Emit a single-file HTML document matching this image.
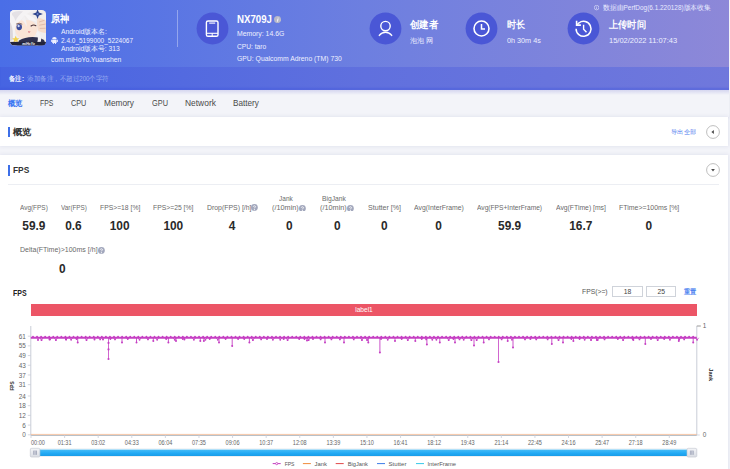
<!DOCTYPE html><html><head><meta charset="utf-8"><style>
html,body{margin:0;padding:0}
body{width:730px;height:469px;overflow:hidden;position:relative;background:#f3f4f9;font-family:"Liberation Sans", sans-serif}
.abs{position:absolute}
.t{position:absolute;white-space:nowrap}
#hdr{position:absolute;left:0;top:0;width:728.5px;height:90px;background:linear-gradient(90deg,#4a6ee7 0%,#6d7fe0 50%,#8d88d8 100%)}
#band{position:absolute;left:0;top:67.2px;width:728.5px;height:22.8px;background:linear-gradient(90deg,#4664e2 0%,#6070de 50%,#7078dc 100%);box-shadow:inset 0 -2.2px 1px rgba(60,80,220,.32)}
#hshadow{position:absolute;left:0;top:90px;width:728.5px;height:5px;background:linear-gradient(rgba(95,95,200,.2),rgba(95,95,200,0))}
#tabs{position:absolute;left:0;top:90px;width:728.5px;height:26.5px;background:#f3f4f9;box-shadow:0 1px 2px rgba(180,185,210,.35)}
.card{position:absolute;left:0;width:728.3px;background:#fff;box-shadow:0 0 4px rgba(190,195,220,.45)}
.inp{position:absolute;top:286.2px;width:28.3px;height:9.3px;border:.7px solid #cfd3da;background:#fff;font-size:6.8px;line-height:9.3px;text-align:center;color:#444}
</style></head><body>
<div id="hdr"></div><div id="band"></div><svg class="abs" style="left:9.9px;top:10px" width="36.1" height="35.6" viewBox="0 0 36 35.5">
<defs><clipPath id="ic"><rect x="0" y="0" width="36" height="35.5" rx="4.2"/></clipPath></defs>
<g clip-path="url(#ic)">
<rect width="36" height="35.5" fill="#f0eded"/>
<path d="M5 14 C6 11 10 10 16 10 C22 10 27 13 27 19 C27 25 23 29 16 29.5 C10 29.5 5 25 5 19 Z" fill="#fae4d6"/>
<path d="M0 0 H27 C22 1 17 3 14 6 C12 9 10 11 7 13 C5 16 4.5 22 5 28 L5.5 35.5 H0 Z" fill="#f5f3f4"/>
<path d="M14 6 C16 9 17 13 16.5 17 C15.5 14 14 11 11.5 10 Z" fill="#f3f1f2"/>
<path d="M14 4 C19 4 24 7 27 12 C25 11 22 10 19 10 C17 8 15.5 6 14 4 Z" fill="#f7f5f6"/>
<path d="M2 3 C5 1 9 0.5 13 1.5 C10 4 7 7 5.5 11 C4.5 8 3.5 6 2 5 Z" fill="#e4e1e5"/>
<path d="M0 12 C2.5 16 3.2 22 2.8 30 L0 31 Z" fill="#dad6db"/>
<ellipse cx="9.2" cy="17" rx="2.8" ry="3.1" fill="#3b4d9c"/>
<ellipse cx="8.6" cy="16" rx="1.1" ry="1.2" fill="#cfd9f7"/>
<path d="M6.2 14 q3 -1.6 6 .2" stroke="#5b4448" stroke-width=".8" fill="none"/>
<path d="M21 16 q2.4 -1.8 4.8 -.3" stroke="#4a3438" stroke-width="1.1" fill="none" stroke-linecap="round"/>
<path d="M18 21.6 q1 1 2.2 0" stroke="#d86f7a" stroke-width=".9" fill="#e88b92"/>
<path d="M27.5 8 C30.5 7.5 33.5 9 36 11 V23 C33 23 30 22 28 20.5 C27 17 26.5 12 27.5 8 Z" fill="#f5dccb"/>
<path d="M29 12 L34.5 10.2 M29.2 15.2 L35.5 14 M29.6 18.4 L35.5 18.2" stroke="#d7a794" stroke-width=".6"/>
<path d="M27.5 -1 L28.8 2.6 L32.8 4 L28.8 5.4 L27.5 9 L26.2 5.4 L22.2 4 L26.2 2.6 Z" fill="#2d438c"/>
<circle cx="27.5" cy="4" r="1" fill="#6d83c8"/>
<path d="M5.7 25.8 L6.8 28.1 L9.3 28.3 L7.4 30 L8 32.4 L5.7 31.2 L3.4 32.4 L4 30 L2.1 28.3 L4.6 28.1 Z" fill="#f3d24f"/>
<path d="M9 30.5 C14 27 22 26 29 27.5 L34 30 L36 35.5 H7 Z" fill="#2e304e"/>
<path d="M27.5 21.5 C31 24 32 28 30.5 32.5 L28 35.5 L25.5 35.5 C28.5 31 28.5 26.5 26 23.5 Z" fill="#f3f1f3"/>
<rect x="0" y="31.8" width="36" height="3.7" fill="#23243a"/>
<text x="18.5" y="34.6" font-size="3.4" fill="#fff" text-anchor="middle" font-family="Liberation Sans" font-weight="700" font-style="italic">miHoYo</text>
</g></svg>
<div class="t" style="left:51.4px;top:12.50px;font-size:9.5px;line-height:11.40px;color:#fff;font-weight:700;transform:scaleX(0.9200);transform-origin:left center;">原神</div>
<div class="t" style="left:60.6px;top:27.92px;font-size:6.8px;line-height:8.16px;color:#eef0ff;font-weight:400;transform:scaleX(0.9929);transform-origin:left center;">Android版本名:</div>
<div class="t" style="left:60.6px;top:36.62px;font-size:6.8px;line-height:8.16px;color:#eef0ff;font-weight:400;transform:scaleX(0.9523);transform-origin:left center;">2.4.0_5199000_5224067</div>
<div class="t" style="left:60.6px;top:45.22px;font-size:6.8px;line-height:8.16px;color:#eef0ff;font-weight:400;transform:scaleX(0.9875);transform-origin:left center;">Android版本号: 313</div>
<div class="t" style="left:51.2px;top:56.02px;font-size:6.8px;line-height:8.16px;color:#eef0ff;font-weight:400;transform:scaleX(0.9985);transform-origin:left center;">com.miHoYo.Yuanshen</div>
<svg class="abs" style="left:51.3px;top:36.9px" width="6.8" height="7.2" viewBox="0 0 6.8 7.2">
<path d="M1.1 2.1 A2.3 2.1 0 0 1 5.7 2.1 Z" fill="#eef0ff"/><rect x="1.1" y="2.6" width="4.6" height="3.3" rx=".4" fill="#eef0ff"/>
<rect x="0" y="2.6" width=".8" height="2.5" rx=".35" fill="#eef0ff"/><rect x="6" y="2.6" width=".8" height="2.5" rx=".35" fill="#eef0ff"/>
<rect x="1.9" y="5.6" width=".9" height="1.5" rx=".35" fill="#eef0ff"/><rect x="4" y="5.6" width=".9" height="1.5" rx=".35" fill="#eef0ff"/>
</svg><div class="abs" style="left:177px;top:10px;width:1px;height:37px;background:rgba(255,255,255,.35)"></div><svg class="abs" style="left:195.6px;top:12.2px" width="33" height="33" viewBox="0 0 33 33"><circle cx="16.5" cy="16.5" r="15.9" fill="#4a57d6"/><rect x="10.4" y="9" width="11.6" height="15.3" rx="1.6" fill="none" stroke="#fff" stroke-width="1.4"/><line x1="13.2" y1="11.1" x2="19.2" y2="11.1" stroke="#fff" stroke-width="1.1"/><line x1="10.4" y1="21.3" x2="22" y2="21.3" stroke="#fff" stroke-width="1.1"/><line x1="16.2" y1="21.3" x2="16.2" y2="24" stroke="#fff" stroke-width="1"/></svg>
<div class="t" style="left:236.9px;top:14.10px;font-size:10.0px;line-height:12.00px;color:#fff;font-weight:700;transform:scaleX(0.9684);transform-origin:left center;">NX709J</div>
<svg class="abs" style="left:274.15px;top:16.35px" width="7.1" height="7.1" viewBox="0 0 10 10"><circle cx="5" cy="5" r="5" fill="#b8b9c9"/><path d="M5.6 4.2 L4.8 8" stroke="#fff" stroke-width="1.3"/><circle cx="5.8" cy="2.7" r=".75" fill="#fff"/></svg><div class="t" style="left:236.9px;top:30.12px;font-size:6.8px;line-height:8.16px;color:#eef0ff;font-weight:400;transform:scaleX(1.0097);transform-origin:left center;">Memory: 14.6G</div>
<div class="t" style="left:236.9px;top:42.52px;font-size:6.8px;line-height:8.16px;color:#eef0ff;font-weight:400;transform:scaleX(0.9784);transform-origin:left center;">CPU: taro</div>
<div class="t" style="left:236.9px;top:54.62px;font-size:6.8px;line-height:8.16px;color:#eef0ff;font-weight:400;transform:scaleX(1.0051);transform-origin:left center;">GPU: Qualcomm Adreno (TM) 730</div>
<svg class="abs" style="left:369.0px;top:12.3px" width="33" height="33" viewBox="0 0 33 33"><circle cx="16.5" cy="16.5" r="15.9" fill="#4a57d6"/><circle cx="16.5" cy="14.1" r="4.7" fill="none" stroke="#fff" stroke-width="1.4"/><path d="M10.3 23.4 A7.6 7.6 0 0 1 22.7 23.4" fill="none" stroke="#fff" stroke-width="1.4" stroke-linecap="round"/></svg>
<div class="t" style="left:409.9px;top:19.08px;font-size:9.7px;line-height:11.64px;color:#fff;font-weight:700;transform:scaleX(0.9400);transform-origin:left center;">创建者</div>
<div class="t" style="left:409.9px;top:36.62px;font-size:6.8px;line-height:8.16px;color:#eef0ff;font-weight:400;transform:scaleX(1.0179);transform-origin:left center;">泡泡 网</div>
<svg class="abs" style="left:464.7px;top:12.100000000000001px" width="33" height="33" viewBox="0 0 33 33"><circle cx="16.5" cy="16.5" r="15.9" fill="#4a57d6"/><circle cx="16.5" cy="16.5" r="7.5" fill="none" stroke="#fff" stroke-width="1.6"/><path d="M16.5 12 V17 H20" fill="none" stroke="#fff" stroke-width="1.5"/></svg>
<div class="t" style="left:506.6px;top:19.08px;font-size:9.7px;line-height:11.64px;color:#fff;font-weight:700;transform:scaleX(0.9100);transform-origin:left center;">时长</div>
<div class="t" style="left:506.6px;top:36.62px;font-size:6.8px;line-height:8.16px;color:#eef0ff;font-weight:400;transform:scaleX(1.0646);transform-origin:left center;">0h 30m 4s</div>
<svg class="abs" style="left:567.1px;top:12.3px" width="33" height="33" viewBox="0 0 33 33"><circle cx="16.5" cy="16.5" r="15.9" fill="#4a57d6"/><g transform="translate(0 .5)"><path d="M9.1 16.2 A7.45 7.45 0 1 0 11.9 10.5" fill="none" stroke="#fff" stroke-width="1.5"/><path d="M9.6 8.3 V12.6 H13.9" fill="none" stroke="#fff" stroke-width="1.6"/><path d="M10 12.2 L12 10.2" stroke="#fff" stroke-width="1.3"/><path d="M16.6 12.3 V16.8 L19.5 19.8" fill="none" stroke="#fff" stroke-width="1.4"/></g></svg>
<div class="t" style="left:608.5px;top:19.08px;font-size:9.7px;line-height:11.64px;color:#fff;font-weight:700;transform:scaleX(0.9200);transform-origin:left center;">上传时间</div>
<div class="t" style="left:608.5px;top:36.62px;font-size:6.8px;line-height:8.16px;color:#eef0ff;font-weight:400;transform:scaleX(1.1025);transform-origin:left center;">15/02/2022 11:07:43</div>
<svg class="abs" style="left:594.3px;top:5.4px" width="5.2" height="5.2" viewBox="0 0 10 10"><circle cx="5" cy="5" r="4.4" fill="none" stroke="#f0f1ff" stroke-width="1.1"/><rect x="4.45" y="4.3" width="1.1" height="3.4" fill="#f0f1ff"/><circle cx="5" cy="2.9" r=".7" fill="#f0f1ff"/></svg><div class="t" style="left:602.6px;top:4.04px;font-size:6.6px;line-height:7.92px;color:#e8eaff;font-weight:400;transform:scaleX(0.9765);transform-origin:left center;">数据由PerfDog(6.1.220128)版本收集</div>
<div class="t" style="left:9.2px;top:74.50px;font-size:6.5px;line-height:7.80px;color:#f2f4ff;font-weight:700;transform:scaleX(0.9275);transform-origin:left center;">备注:</div>
<div class="t" style="left:26.8px;top:74.50px;font-size:6.5px;line-height:7.80px;color:rgba(220,225,255,.55);font-weight:400;transform:scaleX(0.9333);transform-origin:left center;">添加备注，不超过200个字符</div>
<div id="tabs"></div><div id="hshadow"></div><div class="t" style="left:7.7px;top:98.06px;font-size:8.4px;line-height:10.08px;color:#3b76f2;font-weight:700;transform:scaleX(0.9125);transform-origin:left center;">概览</div>
<div class="t" style="left:40.1px;top:98.06px;font-size:8.4px;line-height:10.08px;color:#4a4a4a;font-weight:400;transform:scaleX(0.8222);transform-origin:left center;">FPS</div>
<div class="t" style="left:70.8px;top:98.06px;font-size:8.4px;line-height:10.08px;color:#4a4a4a;font-weight:400;transform:scaleX(0.8650);transform-origin:left center;">CPU</div>
<div class="t" style="left:104.3px;top:98.06px;font-size:8.4px;line-height:10.08px;color:#4a4a4a;font-weight:400;transform:scaleX(0.9917);transform-origin:left center;">Memory</div>
<div class="t" style="left:151.8px;top:98.06px;font-size:8.4px;line-height:10.08px;color:#4a4a4a;font-weight:400;transform:scaleX(0.8812);transform-origin:left center;">GPU</div>
<div class="t" style="left:185.4px;top:98.06px;font-size:8.4px;line-height:10.08px;color:#4a4a4a;font-weight:400;transform:scaleX(1.0059);transform-origin:left center;">Network</div>
<div class="t" style="left:233.4px;top:98.06px;font-size:8.4px;line-height:10.08px;color:#4a4a4a;font-weight:400;transform:scaleX(0.9756);transform-origin:left center;">Battery</div>
<div class="card" style="top:117px;height:29px"></div><div class="abs" style="left:8px;top:126.5px;width:2px;height:10.5px;background:#3d6fe8"></div><div class="t" style="left:13px;top:126.88px;font-size:9.2px;line-height:11.04px;color:#333;font-weight:700;transform:scaleX(1.0333);transform-origin:left center;">概览</div>
<div class="t" style="left:671.3px;top:128.32px;font-size:6.3px;line-height:7.56px;color:#4a78ee;font-weight:400;transform:scaleX(1.0417);transform-origin:left center;">导出全部</div>
<svg class="abs" style="left:706.1px;top:124.9px" width="14" height="14" viewBox="0 0 14 14"><circle cx="7" cy="7" r="6.4" fill="#fff" stroke="#a8a8a8" stroke-width=".75"/><path d="M5.4 7 L7.9 5.1 V8.9 Z" fill="#4a4a4a"/></svg><div class="card" style="top:155px;height:330px"></div><div class="abs" style="left:8px;top:165px;width:2px;height:10.5px;background:#3d6fe8"></div><div class="t" style="left:13.4px;top:164.88px;font-size:9.2px;line-height:11.04px;color:#333;font-weight:700;transform:scaleX(0.9119);transform-origin:left center;">FPS</div>
<svg class="abs" style="left:706.1px;top:162.9px" width="14" height="14" viewBox="0 0 14 14"><circle cx="7" cy="7" r="6.4" fill="#fff" stroke="#a8a8a8" stroke-width=".75"/><path d="M5.1 6 H8.9 L7 8.4 Z" fill="#4a4a4a"/></svg><div class="abs" style="left:8px;top:184px;width:711px;height:1px;background:#eceef3"></div><div class="t" style="left:20.1px;top:203.58px;font-size:6.7px;line-height:8.04px;color:#6a6a6a;font-weight:400;transform:scaleX(0.9628);transform-origin:left center;">Avg(FPS)</div>
<div class="t" style="left:-116.1px;width:300px;text-align:center;top:219.16px;font-size:11.9px;line-height:14.28px;color:#2a2a2a;font-weight:700;">59.9</div>
<div class="t" style="left:61.0px;top:203.58px;font-size:6.7px;line-height:8.04px;color:#6a6a6a;font-weight:400;transform:scaleX(0.9461);transform-origin:left center;">Var(FPS)</div>
<div class="t" style="left:-76.6px;width:300px;text-align:center;top:219.16px;font-size:11.9px;line-height:14.28px;color:#2a2a2a;font-weight:700;">0.6</div>
<div class="t" style="left:99.7px;top:203.58px;font-size:6.7px;line-height:8.04px;color:#6a6a6a;font-weight:400;transform:scaleX(1.0130);transform-origin:left center;">FPS>=18 [%]</div>
<div class="t" style="left:-30.400000000000006px;width:300px;text-align:center;top:219.16px;font-size:11.9px;line-height:14.28px;color:#2a2a2a;font-weight:700;">100</div>
<div class="t" style="left:153.0px;top:203.58px;font-size:6.7px;line-height:8.04px;color:#6a6a6a;font-weight:400;transform:scaleX(1.0156);transform-origin:left center;">FPS>=25 [%]</div>
<div class="t" style="left:23.30000000000001px;width:300px;text-align:center;top:219.16px;font-size:11.9px;line-height:14.28px;color:#2a2a2a;font-weight:700;">100</div>
<div class="t" style="left:206.8px;top:203.58px;font-size:6.7px;line-height:8.04px;color:#6a6a6a;font-weight:400;transform:scaleX(1.0323);transform-origin:left center;">Drop(FPS) [/h]</div>
<svg class="abs" style="left:251.40px;top:204.30px" width="6.8" height="6.8" viewBox="0 0 10 10"><circle cx="5" cy="5" r="5" fill="#a3a8bd"/><path d="M3.4 3.9 C3.4 2.2 6.6 2.2 6.6 3.9 C6.6 5 5 5.1 5 6.3" fill="none" stroke="#fff" stroke-width="1.3"/><circle cx="5" cy="7.9" r=".75" fill="#fff"/></svg><div class="t" style="left:82.1px;width:300px;text-align:center;top:219.16px;font-size:11.9px;line-height:14.28px;color:#2a2a2a;font-weight:700;">4</div>
<div class="t" style="left:367.8px;top:203.58px;font-size:6.7px;line-height:8.04px;color:#6a6a6a;font-weight:400;transform:scaleX(1.0597);transform-origin:left center;">Stutter [%]</div>
<div class="t" style="left:234.2px;width:300px;text-align:center;top:219.16px;font-size:11.9px;line-height:14.28px;color:#2a2a2a;font-weight:700;">0</div>
<div class="t" style="left:414.4px;top:203.58px;font-size:6.7px;line-height:8.04px;color:#6a6a6a;font-weight:400;transform:scaleX(1.0275);transform-origin:left center;">Avg(InterFrame)</div>
<div class="t" style="left:288.6px;width:300px;text-align:center;top:219.16px;font-size:11.9px;line-height:14.28px;color:#2a2a2a;font-weight:700;">0</div>
<div class="t" style="left:477.3px;top:203.58px;font-size:6.7px;line-height:8.04px;color:#6a6a6a;font-weight:400;transform:scaleX(0.9941);transform-origin:left center;">Avg(FPS+InterFrame)</div>
<div class="t" style="left:359.6px;width:300px;text-align:center;top:219.16px;font-size:11.9px;line-height:14.28px;color:#2a2a2a;font-weight:700;">59.9</div>
<div class="t" style="left:556.2px;top:203.58px;font-size:6.7px;line-height:8.04px;color:#6a6a6a;font-weight:400;transform:scaleX(1.0174);transform-origin:left center;">Avg(FTime) [ms]</div>
<div class="t" style="left:430.79999999999995px;width:300px;text-align:center;top:219.16px;font-size:11.9px;line-height:14.28px;color:#2a2a2a;font-weight:700;">16.7</div>
<div class="t" style="left:619.0px;top:203.58px;font-size:6.7px;line-height:8.04px;color:#6a6a6a;font-weight:400;transform:scaleX(1.0377);transform-origin:left center;">FTime>=100ms [%]</div>
<div class="t" style="left:498.79999999999995px;width:300px;text-align:center;top:219.16px;font-size:11.9px;line-height:14.28px;color:#2a2a2a;font-weight:700;">0</div>
<div class="t" style="left:278.5px;top:195.18px;font-size:6.7px;line-height:8.04px;color:#6a6a6a;font-weight:400;transform:scaleX(0.9759);transform-origin:left center;">Jank</div>
<div class="t" style="left:272.0px;top:203.98px;font-size:6.7px;line-height:8.04px;color:#6a6a6a;font-weight:400;transform:scaleX(1.0925);transform-origin:left center;">(/10min)</div>
<svg class="abs" style="left:299.20px;top:204.70px" width="6.8" height="6.8" viewBox="0 0 10 10"><circle cx="5" cy="5" r="5" fill="#a3a8bd"/><path d="M3.4 3.9 C3.4 2.2 6.6 2.2 6.6 3.9 C6.6 5 5 5.1 5 6.3" fill="none" stroke="#fff" stroke-width="1.3"/><circle cx="5" cy="7.9" r=".75" fill="#fff"/></svg><div class="t" style="left:139.2px;width:300px;text-align:center;top:219.16px;font-size:11.9px;line-height:14.28px;color:#2a2a2a;font-weight:700;">0</div>
<div class="t" style="left:321.6px;top:195.18px;font-size:6.7px;line-height:8.04px;color:#6a6a6a;font-weight:400;transform:scaleX(1.0001);transform-origin:left center;">BigJank</div>
<div class="t" style="left:319.9px;top:203.98px;font-size:6.7px;line-height:8.04px;color:#6a6a6a;font-weight:400;transform:scaleX(1.0925);transform-origin:left center;">(/10min)</div>
<svg class="abs" style="left:347.30px;top:204.70px" width="6.8" height="6.8" viewBox="0 0 10 10"><circle cx="5" cy="5" r="5" fill="#a3a8bd"/><path d="M3.4 3.9 C3.4 2.2 6.6 2.2 6.6 3.9 C6.6 5 5 5.1 5 6.3" fill="none" stroke="#fff" stroke-width="1.3"/><circle cx="5" cy="7.9" r=".75" fill="#fff"/></svg><div class="t" style="left:187.39999999999998px;width:300px;text-align:center;top:219.16px;font-size:11.9px;line-height:14.28px;color:#2a2a2a;font-weight:700;">0</div>
<div class="t" style="left:19.9px;top:246.38px;font-size:6.7px;line-height:8.04px;color:#6a6a6a;font-weight:400;transform:scaleX(1.0500);transform-origin:left center;">Delta(FTime)>100ms [/h]</div>
<svg class="abs" style="left:98.00px;top:247.10px" width="6.8" height="6.8" viewBox="0 0 10 10"><circle cx="5" cy="5" r="5" fill="#a3a8bd"/><path d="M3.4 3.9 C3.4 2.2 6.6 2.2 6.6 3.9 C6.6 5 5 5.1 5 6.3" fill="none" stroke="#fff" stroke-width="1.3"/><circle cx="5" cy="7.9" r=".75" fill="#fff"/></svg><div class="t" style="left:-87.6px;width:300px;text-align:center;top:261.96px;font-size:11.9px;line-height:14.28px;color:#2a2a2a;font-weight:700;">0</div>
<div class="t" style="left:12.6px;top:287.54px;font-size:8.6px;line-height:10.32px;color:#222;font-weight:700;transform:scaleX(0.8135);transform-origin:left center;">FPS</div>
<div class="t" style="left:582.3px;top:287.62px;font-size:6.8px;line-height:8.16px;color:#555;font-weight:400;transform:scaleX(0.9966);transform-origin:left center;">FPS(>=)</div>
<div class="inp" style="left:612.3px">18</div><div class="inp" style="left:646.2px">25</div><div class="t" style="left:684.3px;top:287.94px;font-size:6.6px;line-height:7.92px;color:#4c82f0;font-weight:700;transform:scaleX(0.8857);transform-origin:left center;">重置</div>
<div class="abs" style="left:30.8px;top:303.6px;width:666px;height:12px;background:#ec5566"></div><div class="t" style="left:214px;width:300px;text-align:center;top:305.64px;font-size:6.6px;line-height:7.92px;color:#fff;font-weight:400;">label1</div>
<svg class="abs" style="left:0;top:0" width="730" height="469" viewBox="0 0 730 469">
<line x1="30.8" y1="326.0" x2="30.8" y2="435.0" stroke="#c9cdd8" stroke-width="1"/>
<line x1="696.8" y1="326.0" x2="696.8" y2="435.0" stroke="#c9cdd8" stroke-width="1"/>
<line x1="696.8" y1="326.0" x2="700.8" y2="326.0" stroke="#999" stroke-width="1"/>
<line x1="30.8" y1="435.5" x2="696.8" y2="435.5" stroke="#b8c0c8" stroke-width="1"/>
<line x1="30.8" y1="434.4" x2="696.8" y2="434.4" stroke="#f2b287" stroke-width=".75"/>
<line x1="27.8" y1="336.16" x2="30.8" y2="336.16" stroke="#c9cdd8" stroke-width=".8"/>
<text x="25.8" y="338.76" font-size="6.4" fill="#666" text-anchor="end" font-family="Liberation Sans">61</text>
<line x1="27.8" y1="345.87" x2="30.8" y2="345.87" stroke="#c9cdd8" stroke-width=".8"/>
<text x="25.8" y="348.47" font-size="6.4" fill="#666" text-anchor="end" font-family="Liberation Sans">55</text>
<line x1="27.8" y1="355.57" x2="30.8" y2="355.57" stroke="#c9cdd8" stroke-width=".8"/>
<text x="25.8" y="358.17" font-size="6.4" fill="#666" text-anchor="end" font-family="Liberation Sans">49</text>
<line x1="27.8" y1="365.27" x2="30.8" y2="365.27" stroke="#c9cdd8" stroke-width=".8"/>
<text x="25.8" y="367.87" font-size="6.4" fill="#666" text-anchor="end" font-family="Liberation Sans">43</text>
<line x1="27.8" y1="374.97" x2="30.8" y2="374.97" stroke="#c9cdd8" stroke-width=".8"/>
<text x="25.8" y="377.57" font-size="6.4" fill="#666" text-anchor="end" font-family="Liberation Sans">37</text>
<line x1="27.8" y1="384.67" x2="30.8" y2="384.67" stroke="#c9cdd8" stroke-width=".8"/>
<text x="25.8" y="387.27" font-size="6.4" fill="#666" text-anchor="end" font-family="Liberation Sans">31</text>
<line x1="27.8" y1="395.99" x2="30.8" y2="395.99" stroke="#c9cdd8" stroke-width=".8"/>
<text x="25.8" y="398.59" font-size="6.4" fill="#666" text-anchor="end" font-family="Liberation Sans">24</text>
<line x1="27.8" y1="405.69" x2="30.8" y2="405.69" stroke="#c9cdd8" stroke-width=".8"/>
<text x="25.8" y="408.29" font-size="6.4" fill="#666" text-anchor="end" font-family="Liberation Sans">18</text>
<line x1="27.8" y1="415.40" x2="30.8" y2="415.40" stroke="#c9cdd8" stroke-width=".8"/>
<text x="25.8" y="418.00" font-size="6.4" fill="#666" text-anchor="end" font-family="Liberation Sans">12</text>
<line x1="27.8" y1="425.10" x2="30.8" y2="425.10" stroke="#c9cdd8" stroke-width=".8"/>
<text x="25.8" y="427.70" font-size="6.4" fill="#666" text-anchor="end" font-family="Liberation Sans">6</text>
<line x1="27.8" y1="434.80" x2="30.8" y2="434.80" stroke="#c9cdd8" stroke-width=".8"/>
<text x="25.8" y="437.40" font-size="6.4" fill="#666" text-anchor="end" font-family="Liberation Sans">0</text>
<text x="702.8" y="328.4" font-size="6.4" fill="#666" font-family="Liberation Sans">1</text>
<text x="702.8" y="437.2" font-size="6.4" fill="#666" font-family="Liberation Sans">0</text>
<line x1="696.8" y1="435.0" x2="699.8" y2="435.0" stroke="#c9cdd8" stroke-width=".8"/>
<line x1="31.00" y1="435.0" x2="31.00" y2="438.0" stroke="#c9cdd8" stroke-width=".8"/>
<text x="31.0" y="445.1" font-size="6.3" fill="#666" font-family="Liberation Sans" textLength="13.9" lengthAdjust="spacingAndGlyphs">00:00</text>
<line x1="64.60" y1="435.0" x2="64.60" y2="438.0" stroke="#c9cdd8" stroke-width=".8"/>
<text x="57.65" y="445.1" font-size="6.3" fill="#666" font-family="Liberation Sans" textLength="13.9" lengthAdjust="spacingAndGlyphs">01:31</text>
<line x1="98.19" y1="435.0" x2="98.19" y2="438.0" stroke="#c9cdd8" stroke-width=".8"/>
<text x="91.24" y="445.1" font-size="6.3" fill="#666" font-family="Liberation Sans" textLength="13.9" lengthAdjust="spacingAndGlyphs">03:02</text>
<line x1="131.79" y1="435.0" x2="131.79" y2="438.0" stroke="#c9cdd8" stroke-width=".8"/>
<text x="124.84" y="445.1" font-size="6.3" fill="#666" font-family="Liberation Sans" textLength="13.9" lengthAdjust="spacingAndGlyphs">04:33</text>
<line x1="165.38" y1="435.0" x2="165.38" y2="438.0" stroke="#c9cdd8" stroke-width=".8"/>
<text x="158.43" y="445.1" font-size="6.3" fill="#666" font-family="Liberation Sans" textLength="13.9" lengthAdjust="spacingAndGlyphs">06:04</text>
<line x1="198.98" y1="435.0" x2="198.98" y2="438.0" stroke="#c9cdd8" stroke-width=".8"/>
<text x="192.03" y="445.1" font-size="6.3" fill="#666" font-family="Liberation Sans" textLength="13.9" lengthAdjust="spacingAndGlyphs">07:35</text>
<line x1="232.57" y1="435.0" x2="232.57" y2="438.0" stroke="#c9cdd8" stroke-width=".8"/>
<text x="225.62" y="445.1" font-size="6.3" fill="#666" font-family="Liberation Sans" textLength="13.9" lengthAdjust="spacingAndGlyphs">09:06</text>
<line x1="266.17" y1="435.0" x2="266.17" y2="438.0" stroke="#c9cdd8" stroke-width=".8"/>
<text x="259.22" y="445.1" font-size="6.3" fill="#666" font-family="Liberation Sans" textLength="13.9" lengthAdjust="spacingAndGlyphs">10:37</text>
<line x1="299.76" y1="435.0" x2="299.76" y2="438.0" stroke="#c9cdd8" stroke-width=".8"/>
<text x="292.81" y="445.1" font-size="6.3" fill="#666" font-family="Liberation Sans" textLength="13.9" lengthAdjust="spacingAndGlyphs">12:08</text>
<line x1="333.36" y1="435.0" x2="333.36" y2="438.0" stroke="#c9cdd8" stroke-width=".8"/>
<text x="326.41" y="445.1" font-size="6.3" fill="#666" font-family="Liberation Sans" textLength="13.9" lengthAdjust="spacingAndGlyphs">13:39</text>
<line x1="366.95" y1="435.0" x2="366.95" y2="438.0" stroke="#c9cdd8" stroke-width=".8"/>
<text x="360.00" y="445.1" font-size="6.3" fill="#666" font-family="Liberation Sans" textLength="13.9" lengthAdjust="spacingAndGlyphs">15:10</text>
<line x1="400.55" y1="435.0" x2="400.55" y2="438.0" stroke="#c9cdd8" stroke-width=".8"/>
<text x="393.60" y="445.1" font-size="6.3" fill="#666" font-family="Liberation Sans" textLength="13.9" lengthAdjust="spacingAndGlyphs">16:41</text>
<line x1="434.14" y1="435.0" x2="434.14" y2="438.0" stroke="#c9cdd8" stroke-width=".8"/>
<text x="427.19" y="445.1" font-size="6.3" fill="#666" font-family="Liberation Sans" textLength="13.9" lengthAdjust="spacingAndGlyphs">18:12</text>
<line x1="467.74" y1="435.0" x2="467.74" y2="438.0" stroke="#c9cdd8" stroke-width=".8"/>
<text x="460.79" y="445.1" font-size="6.3" fill="#666" font-family="Liberation Sans" textLength="13.9" lengthAdjust="spacingAndGlyphs">19:43</text>
<line x1="501.33" y1="435.0" x2="501.33" y2="438.0" stroke="#c9cdd8" stroke-width=".8"/>
<text x="494.38" y="445.1" font-size="6.3" fill="#666" font-family="Liberation Sans" textLength="13.9" lengthAdjust="spacingAndGlyphs">21:14</text>
<line x1="534.93" y1="435.0" x2="534.93" y2="438.0" stroke="#c9cdd8" stroke-width=".8"/>
<text x="527.98" y="445.1" font-size="6.3" fill="#666" font-family="Liberation Sans" textLength="13.9" lengthAdjust="spacingAndGlyphs">22:45</text>
<line x1="568.53" y1="435.0" x2="568.53" y2="438.0" stroke="#c9cdd8" stroke-width=".8"/>
<text x="561.58" y="445.1" font-size="6.3" fill="#666" font-family="Liberation Sans" textLength="13.9" lengthAdjust="spacingAndGlyphs">24:16</text>
<line x1="602.12" y1="435.0" x2="602.12" y2="438.0" stroke="#c9cdd8" stroke-width=".8"/>
<text x="595.17" y="445.1" font-size="6.3" fill="#666" font-family="Liberation Sans" textLength="13.9" lengthAdjust="spacingAndGlyphs">25:47</text>
<line x1="635.72" y1="435.0" x2="635.72" y2="438.0" stroke="#c9cdd8" stroke-width=".8"/>
<text x="628.77" y="445.1" font-size="6.3" fill="#666" font-family="Liberation Sans" textLength="13.9" lengthAdjust="spacingAndGlyphs">27:18</text>
<line x1="669.31" y1="435.0" x2="669.31" y2="438.0" stroke="#c9cdd8" stroke-width=".8"/>
<text x="662.36" y="445.1" font-size="6.3" fill="#666" font-family="Liberation Sans" textLength="13.9" lengthAdjust="spacingAndGlyphs">28:49</text>
<text x="0" y="0" font-size="5.6" fill="#333" font-weight="700" font-family="Liberation Sans" text-anchor="middle" textLength="9.4" lengthAdjust="spacingAndGlyphs" transform="translate(14 385.9) rotate(-90)">FPS</text>
<text x="0" y="0" font-size="5.8" fill="#222" font-weight="700" font-family="Liberation Sans" text-anchor="middle" textLength="12.8" lengthAdjust="spacingAndGlyphs" transform="translate(709 374.7) rotate(90)">Jank</text>
<path d="M30.8 337.8 H696.8" stroke="#c53fc3" stroke-width="1.9"/>
<circle cx="33.00" cy="336.7" r=".95" fill="#c53fc3"/>
<circle cx="37.05" cy="336.7" r=".95" fill="#c53fc3"/>
<circle cx="41.10" cy="336.7" r=".95" fill="#c53fc3"/>
<circle cx="45.15" cy="336.7" r=".95" fill="#c53fc3"/>
<circle cx="49.20" cy="336.7" r=".95" fill="#c53fc3"/>
<circle cx="53.25" cy="336.7" r=".95" fill="#c53fc3"/>
<circle cx="57.30" cy="336.7" r=".95" fill="#c53fc3"/>
<circle cx="61.35" cy="336.7" r=".95" fill="#c53fc3"/>
<circle cx="65.40" cy="336.7" r=".95" fill="#c53fc3"/>
<circle cx="69.45" cy="336.7" r=".95" fill="#c53fc3"/>
<circle cx="73.50" cy="336.7" r=".95" fill="#c53fc3"/>
<circle cx="77.55" cy="336.7" r=".95" fill="#c53fc3"/>
<circle cx="81.60" cy="336.7" r=".95" fill="#c53fc3"/>
<circle cx="85.65" cy="336.7" r=".95" fill="#c53fc3"/>
<circle cx="89.70" cy="336.7" r=".95" fill="#c53fc3"/>
<circle cx="93.75" cy="336.7" r=".95" fill="#c53fc3"/>
<circle cx="97.80" cy="336.7" r=".95" fill="#c53fc3"/>
<circle cx="101.85" cy="336.7" r=".95" fill="#c53fc3"/>
<circle cx="105.90" cy="336.7" r=".95" fill="#c53fc3"/>
<circle cx="109.95" cy="336.7" r=".95" fill="#c53fc3"/>
<circle cx="114.00" cy="336.7" r=".95" fill="#c53fc3"/>
<circle cx="118.05" cy="336.7" r=".95" fill="#c53fc3"/>
<circle cx="122.10" cy="336.7" r=".95" fill="#c53fc3"/>
<circle cx="126.15" cy="336.7" r=".95" fill="#c53fc3"/>
<circle cx="130.20" cy="336.7" r=".95" fill="#c53fc3"/>
<circle cx="134.25" cy="336.7" r=".95" fill="#c53fc3"/>
<circle cx="138.30" cy="336.7" r=".95" fill="#c53fc3"/>
<circle cx="142.35" cy="336.7" r=".95" fill="#c53fc3"/>
<circle cx="146.40" cy="336.7" r=".95" fill="#c53fc3"/>
<circle cx="150.45" cy="336.7" r=".95" fill="#c53fc3"/>
<circle cx="154.50" cy="336.7" r=".95" fill="#c53fc3"/>
<circle cx="158.55" cy="336.7" r=".95" fill="#c53fc3"/>
<circle cx="162.60" cy="336.7" r=".95" fill="#c53fc3"/>
<circle cx="166.65" cy="336.7" r=".95" fill="#c53fc3"/>
<circle cx="170.70" cy="336.7" r=".95" fill="#c53fc3"/>
<circle cx="174.75" cy="336.7" r=".95" fill="#c53fc3"/>
<circle cx="178.80" cy="336.7" r=".95" fill="#c53fc3"/>
<circle cx="182.85" cy="336.7" r=".95" fill="#c53fc3"/>
<circle cx="186.90" cy="336.7" r=".95" fill="#c53fc3"/>
<circle cx="190.95" cy="336.7" r=".95" fill="#c53fc3"/>
<circle cx="195.00" cy="336.7" r=".95" fill="#c53fc3"/>
<circle cx="199.05" cy="336.7" r=".95" fill="#c53fc3"/>
<circle cx="203.10" cy="336.7" r=".95" fill="#c53fc3"/>
<circle cx="207.15" cy="336.7" r=".95" fill="#c53fc3"/>
<circle cx="211.20" cy="336.7" r=".95" fill="#c53fc3"/>
<circle cx="215.25" cy="336.7" r=".95" fill="#c53fc3"/>
<circle cx="219.30" cy="336.7" r=".95" fill="#c53fc3"/>
<circle cx="223.35" cy="336.7" r=".95" fill="#c53fc3"/>
<circle cx="227.40" cy="336.7" r=".95" fill="#c53fc3"/>
<circle cx="231.45" cy="336.7" r=".95" fill="#c53fc3"/>
<circle cx="235.50" cy="336.7" r=".95" fill="#c53fc3"/>
<circle cx="239.55" cy="336.7" r=".95" fill="#c53fc3"/>
<circle cx="243.60" cy="336.7" r=".95" fill="#c53fc3"/>
<circle cx="247.65" cy="336.7" r=".95" fill="#c53fc3"/>
<circle cx="251.70" cy="336.7" r=".95" fill="#c53fc3"/>
<circle cx="255.75" cy="336.7" r=".95" fill="#c53fc3"/>
<circle cx="259.80" cy="336.7" r=".95" fill="#c53fc3"/>
<circle cx="263.85" cy="336.7" r=".95" fill="#c53fc3"/>
<circle cx="267.90" cy="336.7" r=".95" fill="#c53fc3"/>
<circle cx="271.95" cy="336.7" r=".95" fill="#c53fc3"/>
<circle cx="276.00" cy="336.7" r=".95" fill="#c53fc3"/>
<circle cx="280.05" cy="336.7" r=".95" fill="#c53fc3"/>
<circle cx="284.10" cy="336.7" r=".95" fill="#c53fc3"/>
<circle cx="288.15" cy="336.7" r=".95" fill="#c53fc3"/>
<circle cx="292.20" cy="336.7" r=".95" fill="#c53fc3"/>
<circle cx="296.25" cy="336.7" r=".95" fill="#c53fc3"/>
<circle cx="300.30" cy="336.7" r=".95" fill="#c53fc3"/>
<circle cx="304.35" cy="336.7" r=".95" fill="#c53fc3"/>
<circle cx="308.40" cy="336.7" r=".95" fill="#c53fc3"/>
<circle cx="312.45" cy="336.7" r=".95" fill="#c53fc3"/>
<circle cx="316.50" cy="336.7" r=".95" fill="#c53fc3"/>
<circle cx="320.55" cy="336.7" r=".95" fill="#c53fc3"/>
<circle cx="324.60" cy="336.7" r=".95" fill="#c53fc3"/>
<circle cx="328.65" cy="336.7" r=".95" fill="#c53fc3"/>
<circle cx="332.70" cy="336.7" r=".95" fill="#c53fc3"/>
<circle cx="336.75" cy="336.7" r=".95" fill="#c53fc3"/>
<circle cx="340.80" cy="336.7" r=".95" fill="#c53fc3"/>
<circle cx="344.85" cy="336.7" r=".95" fill="#c53fc3"/>
<circle cx="348.90" cy="336.7" r=".95" fill="#c53fc3"/>
<circle cx="352.95" cy="336.7" r=".95" fill="#c53fc3"/>
<circle cx="357.00" cy="336.7" r=".95" fill="#c53fc3"/>
<circle cx="361.05" cy="336.7" r=".95" fill="#c53fc3"/>
<circle cx="365.10" cy="336.7" r=".95" fill="#c53fc3"/>
<circle cx="369.15" cy="336.7" r=".95" fill="#c53fc3"/>
<circle cx="373.20" cy="336.7" r=".95" fill="#c53fc3"/>
<circle cx="377.25" cy="336.7" r=".95" fill="#c53fc3"/>
<circle cx="381.30" cy="336.7" r=".95" fill="#c53fc3"/>
<circle cx="385.35" cy="336.7" r=".95" fill="#c53fc3"/>
<circle cx="389.40" cy="336.7" r=".95" fill="#c53fc3"/>
<circle cx="393.45" cy="336.7" r=".95" fill="#c53fc3"/>
<circle cx="397.50" cy="336.7" r=".95" fill="#c53fc3"/>
<circle cx="401.55" cy="336.7" r=".95" fill="#c53fc3"/>
<circle cx="405.60" cy="336.7" r=".95" fill="#c53fc3"/>
<circle cx="409.65" cy="336.7" r=".95" fill="#c53fc3"/>
<circle cx="413.70" cy="336.7" r=".95" fill="#c53fc3"/>
<circle cx="417.75" cy="336.7" r=".95" fill="#c53fc3"/>
<circle cx="421.80" cy="336.7" r=".95" fill="#c53fc3"/>
<circle cx="425.85" cy="336.7" r=".95" fill="#c53fc3"/>
<circle cx="429.90" cy="336.7" r=".95" fill="#c53fc3"/>
<circle cx="433.95" cy="336.7" r=".95" fill="#c53fc3"/>
<circle cx="438.00" cy="336.7" r=".95" fill="#c53fc3"/>
<circle cx="442.05" cy="336.7" r=".95" fill="#c53fc3"/>
<circle cx="446.10" cy="336.7" r=".95" fill="#c53fc3"/>
<circle cx="450.15" cy="336.7" r=".95" fill="#c53fc3"/>
<circle cx="454.20" cy="336.7" r=".95" fill="#c53fc3"/>
<circle cx="458.25" cy="336.7" r=".95" fill="#c53fc3"/>
<circle cx="462.30" cy="336.7" r=".95" fill="#c53fc3"/>
<circle cx="466.35" cy="336.7" r=".95" fill="#c53fc3"/>
<circle cx="470.40" cy="336.7" r=".95" fill="#c53fc3"/>
<circle cx="474.45" cy="336.7" r=".95" fill="#c53fc3"/>
<circle cx="478.50" cy="336.7" r=".95" fill="#c53fc3"/>
<circle cx="482.55" cy="336.7" r=".95" fill="#c53fc3"/>
<circle cx="486.60" cy="336.7" r=".95" fill="#c53fc3"/>
<circle cx="490.65" cy="336.7" r=".95" fill="#c53fc3"/>
<circle cx="494.70" cy="336.7" r=".95" fill="#c53fc3"/>
<circle cx="498.75" cy="336.7" r=".95" fill="#c53fc3"/>
<circle cx="502.80" cy="336.7" r=".95" fill="#c53fc3"/>
<circle cx="506.85" cy="336.7" r=".95" fill="#c53fc3"/>
<circle cx="510.90" cy="336.7" r=".95" fill="#c53fc3"/>
<circle cx="514.95" cy="336.7" r=".95" fill="#c53fc3"/>
<circle cx="519.00" cy="336.7" r=".95" fill="#c53fc3"/>
<circle cx="523.05" cy="336.7" r=".95" fill="#c53fc3"/>
<circle cx="527.10" cy="336.7" r=".95" fill="#c53fc3"/>
<circle cx="531.15" cy="336.7" r=".95" fill="#c53fc3"/>
<circle cx="535.20" cy="336.7" r=".95" fill="#c53fc3"/>
<circle cx="539.25" cy="336.7" r=".95" fill="#c53fc3"/>
<circle cx="543.30" cy="336.7" r=".95" fill="#c53fc3"/>
<circle cx="547.35" cy="336.7" r=".95" fill="#c53fc3"/>
<circle cx="551.40" cy="336.7" r=".95" fill="#c53fc3"/>
<circle cx="555.45" cy="336.7" r=".95" fill="#c53fc3"/>
<circle cx="559.50" cy="336.7" r=".95" fill="#c53fc3"/>
<circle cx="563.55" cy="336.7" r=".95" fill="#c53fc3"/>
<circle cx="567.60" cy="336.7" r=".95" fill="#c53fc3"/>
<circle cx="571.65" cy="336.7" r=".95" fill="#c53fc3"/>
<circle cx="575.70" cy="336.7" r=".95" fill="#c53fc3"/>
<circle cx="579.75" cy="336.7" r=".95" fill="#c53fc3"/>
<circle cx="583.80" cy="336.7" r=".95" fill="#c53fc3"/>
<circle cx="587.85" cy="336.7" r=".95" fill="#c53fc3"/>
<circle cx="591.90" cy="336.7" r=".95" fill="#c53fc3"/>
<circle cx="595.95" cy="336.7" r=".95" fill="#c53fc3"/>
<circle cx="600.00" cy="336.7" r=".95" fill="#c53fc3"/>
<circle cx="604.05" cy="336.7" r=".95" fill="#c53fc3"/>
<circle cx="608.10" cy="336.7" r=".95" fill="#c53fc3"/>
<circle cx="612.15" cy="336.7" r=".95" fill="#c53fc3"/>
<circle cx="616.20" cy="336.7" r=".95" fill="#c53fc3"/>
<circle cx="620.25" cy="336.7" r=".95" fill="#c53fc3"/>
<circle cx="624.30" cy="336.7" r=".95" fill="#c53fc3"/>
<circle cx="628.35" cy="336.7" r=".95" fill="#c53fc3"/>
<circle cx="632.40" cy="336.7" r=".95" fill="#c53fc3"/>
<circle cx="636.45" cy="336.7" r=".95" fill="#c53fc3"/>
<circle cx="640.50" cy="336.7" r=".95" fill="#c53fc3"/>
<circle cx="644.55" cy="336.7" r=".95" fill="#c53fc3"/>
<circle cx="648.60" cy="336.7" r=".95" fill="#c53fc3"/>
<circle cx="652.65" cy="336.7" r=".95" fill="#c53fc3"/>
<circle cx="656.70" cy="336.7" r=".95" fill="#c53fc3"/>
<circle cx="660.75" cy="336.7" r=".95" fill="#c53fc3"/>
<circle cx="664.80" cy="336.7" r=".95" fill="#c53fc3"/>
<circle cx="668.85" cy="336.7" r=".95" fill="#c53fc3"/>
<circle cx="672.90" cy="336.7" r=".95" fill="#c53fc3"/>
<circle cx="676.95" cy="336.7" r=".95" fill="#c53fc3"/>
<circle cx="681.00" cy="336.7" r=".95" fill="#c53fc3"/>
<circle cx="685.05" cy="336.7" r=".95" fill="#c53fc3"/>
<circle cx="689.10" cy="336.7" r=".95" fill="#c53fc3"/>
<circle cx="693.15" cy="336.7" r=".95" fill="#c53fc3"/>
<path d="M38 337.8 V340" stroke="#c53fc3" stroke-width=".9"/><circle cx="38" cy="340" r="1" fill="#c53fc3"/>
<path d="M49.5 337.8 V339.5" stroke="#c53fc3" stroke-width=".9"/><circle cx="49.5" cy="339.5" r="1" fill="#c53fc3"/>
<path d="M66 337.8 V339.5" stroke="#c53fc3" stroke-width=".9"/><circle cx="66" cy="339.5" r="1" fill="#c53fc3"/>
<path d="M77.7 337.8 V342.5" stroke="#c53fc3" stroke-width=".9"/><circle cx="77.7" cy="342.5" r="1" fill="#c53fc3"/>
<path d="M94.5 337.8 V339.5" stroke="#c53fc3" stroke-width=".9"/><circle cx="94.5" cy="339.5" r="1" fill="#c53fc3"/>
<path d="M103 337.8 V339.5" stroke="#c53fc3" stroke-width=".9"/><circle cx="103" cy="339.5" r="1" fill="#c53fc3"/>
<path d="M122 337.8 V342.5" stroke="#c53fc3" stroke-width=".9"/><circle cx="122" cy="342.5" r="1" fill="#c53fc3"/>
<path d="M136.5 337.8 V342.5" stroke="#c53fc3" stroke-width=".9"/><circle cx="136.5" cy="342.5" r="1" fill="#c53fc3"/>
<path d="M153.3 337.8 V341" stroke="#c53fc3" stroke-width=".9"/><circle cx="153.3" cy="341" r="1" fill="#c53fc3"/>
<path d="M168.4 337.8 V342.5" stroke="#c53fc3" stroke-width=".9"/><circle cx="168.4" cy="342.5" r="1" fill="#c53fc3"/>
<path d="M176 337.8 V341" stroke="#c53fc3" stroke-width=".9"/><circle cx="176" cy="341" r="1" fill="#c53fc3"/>
<path d="M184.4 337.8 V339.5" stroke="#c53fc3" stroke-width=".9"/><circle cx="184.4" cy="339.5" r="1" fill="#c53fc3"/>
<path d="M200.3 337.8 V341" stroke="#c53fc3" stroke-width=".9"/><circle cx="200.3" cy="341" r="1" fill="#c53fc3"/>
<path d="M203.9 337.8 V341" stroke="#c53fc3" stroke-width=".9"/><circle cx="203.9" cy="341" r="1" fill="#c53fc3"/>
<path d="M219 337.8 V342.5" stroke="#c53fc3" stroke-width=".9"/><circle cx="219" cy="342.5" r="1" fill="#c53fc3"/>
<path d="M232.2 337.8 V346" stroke="#c53fc3" stroke-width=".9"/><circle cx="232.2" cy="346" r="1" fill="#c53fc3"/>
<path d="M249.4 337.8 V342.5" stroke="#c53fc3" stroke-width=".9"/><circle cx="249.4" cy="342.5" r="1" fill="#c53fc3"/>
<path d="M267 337.8 V339" stroke="#c53fc3" stroke-width=".9"/><circle cx="267" cy="339" r="1" fill="#c53fc3"/>
<path d="M283.7 337.8 V339" stroke="#c53fc3" stroke-width=".9"/><circle cx="283.7" cy="339" r="1" fill="#c53fc3"/>
<path d="M307 337.8 V340.5" stroke="#c53fc3" stroke-width=".9"/><circle cx="307" cy="340.5" r="1" fill="#c53fc3"/>
<path d="M313 337.8 V339" stroke="#c53fc3" stroke-width=".9"/><circle cx="313" cy="339" r="1" fill="#c53fc3"/>
<path d="M325 337.8 V342.5" stroke="#c53fc3" stroke-width=".9"/><circle cx="325" cy="342.5" r="1" fill="#c53fc3"/>
<path d="M344 337.8 V342.5" stroke="#c53fc3" stroke-width=".9"/><circle cx="344" cy="342.5" r="1" fill="#c53fc3"/>
<path d="M368.3 337.8 V342.5" stroke="#c53fc3" stroke-width=".9"/><circle cx="368.3" cy="342.5" r="1" fill="#c53fc3"/>
<path d="M379.9 337.8 V352.5" stroke="#c53fc3" stroke-width=".9"/><circle cx="379.9" cy="352.5" r="1" fill="#c53fc3"/>
<path d="M395 337.8 V341" stroke="#c53fc3" stroke-width=".9"/><circle cx="395" cy="341" r="1" fill="#c53fc3"/>
<path d="M415.3 337.8 V341" stroke="#c53fc3" stroke-width=".9"/><circle cx="415.3" cy="341" r="1" fill="#c53fc3"/>
<path d="M426.9 337.8 V344.5" stroke="#c53fc3" stroke-width=".9"/><circle cx="426.9" cy="344.5" r="1" fill="#c53fc3"/>
<path d="M439.8 337.8 V342.5" stroke="#c53fc3" stroke-width=".9"/><circle cx="439.8" cy="342.5" r="1" fill="#c53fc3"/>
<path d="M455 337.8 V342.5" stroke="#c53fc3" stroke-width=".9"/><circle cx="455" cy="342.5" r="1" fill="#c53fc3"/>
<path d="M474 337.8 V345.5" stroke="#c53fc3" stroke-width=".9"/><circle cx="474" cy="345.5" r="1" fill="#c53fc3"/>
<path d="M483.7 337.8 V342.5" stroke="#c53fc3" stroke-width=".9"/><circle cx="483.7" cy="342.5" r="1" fill="#c53fc3"/>
<path d="M507.7 337.8 V341" stroke="#c53fc3" stroke-width=".9"/><circle cx="507.7" cy="341" r="1" fill="#c53fc3"/>
<path d="M513 337.8 V347.5" stroke="#c53fc3" stroke-width=".9"/><circle cx="513" cy="347.5" r="1" fill="#c53fc3"/>
<path d="M530.4 337.8 V339" stroke="#c53fc3" stroke-width=".9"/><circle cx="530.4" cy="339" r="1" fill="#c53fc3"/>
<path d="M551.8 337.8 V344" stroke="#c53fc3" stroke-width=".9"/><circle cx="551.8" cy="344" r="1" fill="#c53fc3"/>
<path d="M563 337.8 V342.5" stroke="#c53fc3" stroke-width=".9"/><circle cx="563" cy="342.5" r="1" fill="#c53fc3"/>
<path d="M573.4 337.8 V341" stroke="#c53fc3" stroke-width=".9"/><circle cx="573.4" cy="341" r="1" fill="#c53fc3"/>
<path d="M596.9 337.8 V340" stroke="#c53fc3" stroke-width=".9"/><circle cx="596.9" cy="340" r="1" fill="#c53fc3"/>
<path d="M633.3 337.8 V340" stroke="#c53fc3" stroke-width=".9"/><circle cx="633.3" cy="340" r="1" fill="#c53fc3"/>
<path d="M645.3 337.8 V344" stroke="#c53fc3" stroke-width=".9"/><circle cx="645.3" cy="344" r="1" fill="#c53fc3"/>
<path d="M678.8 337.8 V341" stroke="#c53fc3" stroke-width=".9"/><circle cx="678.8" cy="341" r="1" fill="#c53fc3"/>
<path d="M693.2 337.8 V342.5" stroke="#c53fc3" stroke-width=".9"/><circle cx="693.2" cy="342.5" r="1" fill="#c53fc3"/>
<circle cx="41.52" cy="340.20" r=".9" fill="#c53fc3"/><path d="M39.92 337.8 L41.52 340.20 L43.12 337.8" fill="none" stroke="#c53fc3" stroke-width=".8"/>
<circle cx="50.04" cy="339.40" r=".9" fill="#c53fc3"/><path d="M48.44 337.8 L50.04 339.40 L51.64 337.8" fill="none" stroke="#c53fc3" stroke-width=".8"/>
<circle cx="55.89" cy="340.20" r=".9" fill="#c53fc3"/><path d="M54.29 337.8 L55.89 340.20 L57.49 337.8" fill="none" stroke="#c53fc3" stroke-width=".8"/>
<circle cx="66.19" cy="339.40" r=".9" fill="#c53fc3"/><path d="M64.59 337.8 L66.19 339.40 L67.79 337.8" fill="none" stroke="#c53fc3" stroke-width=".8"/>
<circle cx="71.13" cy="339.80" r=".9" fill="#c53fc3"/><path d="M69.53 337.8 L71.13 339.80 L72.73 337.8" fill="none" stroke="#c53fc3" stroke-width=".8"/>
<circle cx="76.55" cy="339.00" r=".9" fill="#c53fc3"/><path d="M74.95 337.8 L76.55 339.00 L78.15 337.8" fill="none" stroke="#c53fc3" stroke-width=".8"/>
<circle cx="86.50" cy="340.20" r=".9" fill="#c53fc3"/><path d="M84.90 337.8 L86.50 340.20 L88.10 337.8" fill="none" stroke="#c53fc3" stroke-width=".8"/>
<circle cx="100.15" cy="339.40" r=".9" fill="#c53fc3"/><path d="M98.55 337.8 L100.15 339.40 L101.75 337.8" fill="none" stroke="#c53fc3" stroke-width=".8"/>
<circle cx="110.38" cy="339.00" r=".9" fill="#c53fc3"/><path d="M108.78 337.8 L110.38 339.00 L111.98 337.8" fill="none" stroke="#c53fc3" stroke-width=".8"/>
<circle cx="114.98" cy="339.40" r=".9" fill="#c53fc3"/><path d="M113.38 337.8 L114.98 339.40 L116.58 337.8" fill="none" stroke="#c53fc3" stroke-width=".8"/>
<circle cx="127.77" cy="339.00" r=".9" fill="#c53fc3"/><path d="M126.17 337.8 L127.77 339.00 L129.37 337.8" fill="none" stroke="#c53fc3" stroke-width=".8"/>
<circle cx="139.55" cy="339.80" r=".9" fill="#c53fc3"/><path d="M137.95 337.8 L139.55 339.80 L141.15 337.8" fill="none" stroke="#c53fc3" stroke-width=".8"/>
<circle cx="147.96" cy="339.40" r=".9" fill="#c53fc3"/><path d="M146.36 337.8 L147.96 339.40 L149.56 337.8" fill="none" stroke="#c53fc3" stroke-width=".8"/>
<circle cx="157.15" cy="339.80" r=".9" fill="#c53fc3"/><path d="M155.55 337.8 L157.15 339.80 L158.75 337.8" fill="none" stroke="#c53fc3" stroke-width=".8"/>
<circle cx="166.15" cy="339.00" r=".9" fill="#c53fc3"/><path d="M164.55 337.8 L166.15 339.00 L167.75 337.8" fill="none" stroke="#c53fc3" stroke-width=".8"/>
<circle cx="174.72" cy="339.80" r=".9" fill="#c53fc3"/><path d="M173.12 337.8 L174.72 339.80 L176.32 337.8" fill="none" stroke="#c53fc3" stroke-width=".8"/>
<circle cx="182.79" cy="339.00" r=".9" fill="#c53fc3"/><path d="M181.19 337.8 L182.79 339.00 L184.39 337.8" fill="none" stroke="#c53fc3" stroke-width=".8"/>
<circle cx="193.87" cy="339.80" r=".9" fill="#c53fc3"/><path d="M192.27 337.8 L193.87 339.80 L195.47 337.8" fill="none" stroke="#c53fc3" stroke-width=".8"/>
<circle cx="205.45" cy="339.80" r=".9" fill="#c53fc3"/><path d="M203.85 337.8 L205.45 339.80 L207.05 337.8" fill="none" stroke="#c53fc3" stroke-width=".8"/>
<circle cx="209.74" cy="339.00" r=".9" fill="#c53fc3"/><path d="M208.14 337.8 L209.74 339.00 L211.34 337.8" fill="none" stroke="#c53fc3" stroke-width=".8"/>
<circle cx="217.75" cy="339.80" r=".9" fill="#c53fc3"/><path d="M216.15 337.8 L217.75 339.80 L219.35 337.8" fill="none" stroke="#c53fc3" stroke-width=".8"/>
<circle cx="225.61" cy="339.00" r=".9" fill="#c53fc3"/><path d="M224.01 337.8 L225.61 339.00 L227.21 337.8" fill="none" stroke="#c53fc3" stroke-width=".8"/>
<circle cx="238.09" cy="339.00" r=".9" fill="#c53fc3"/><path d="M236.49 337.8 L238.09 339.00 L239.69 337.8" fill="none" stroke="#c53fc3" stroke-width=".8"/>
<circle cx="244.22" cy="339.00" r=".9" fill="#c53fc3"/><path d="M242.62 337.8 L244.22 339.00 L245.82 337.8" fill="none" stroke="#c53fc3" stroke-width=".8"/>
<circle cx="252.92" cy="340.20" r=".9" fill="#c53fc3"/><path d="M251.32 337.8 L252.92 340.20 L254.52 337.8" fill="none" stroke="#c53fc3" stroke-width=".8"/>
<circle cx="261.12" cy="339.40" r=".9" fill="#c53fc3"/><path d="M259.52 337.8 L261.12 339.40 L262.72 337.8" fill="none" stroke="#c53fc3" stroke-width=".8"/>
<circle cx="272.90" cy="339.80" r=".9" fill="#c53fc3"/><path d="M271.30 337.8 L272.90 339.80 L274.50 337.8" fill="none" stroke="#c53fc3" stroke-width=".8"/>
<circle cx="280.27" cy="339.80" r=".9" fill="#c53fc3"/><path d="M278.67 337.8 L280.27 339.80 L281.87 337.8" fill="none" stroke="#c53fc3" stroke-width=".8"/>
<circle cx="287.60" cy="340.20" r=".9" fill="#c53fc3"/><path d="M286.00 337.8 L287.60 340.20 L289.20 337.8" fill="none" stroke="#c53fc3" stroke-width=".8"/>
<circle cx="299.18" cy="339.00" r=".9" fill="#c53fc3"/><path d="M297.58 337.8 L299.18 339.00 L300.78 337.8" fill="none" stroke="#c53fc3" stroke-width=".8"/>
<circle cx="304.52" cy="339.00" r=".9" fill="#c53fc3"/><path d="M302.92 337.8 L304.52 339.00 L306.12 337.8" fill="none" stroke="#c53fc3" stroke-width=".8"/>
<circle cx="308.63" cy="340.20" r=".9" fill="#c53fc3"/><path d="M307.03 337.8 L308.63 340.20 L310.23 337.8" fill="none" stroke="#c53fc3" stroke-width=".8"/>
<circle cx="320.60" cy="339.40" r=".9" fill="#c53fc3"/><path d="M319.00 337.8 L320.60 339.40 L322.20 337.8" fill="none" stroke="#c53fc3" stroke-width=".8"/>
<circle cx="331.42" cy="339.40" r=".9" fill="#c53fc3"/><path d="M329.82 337.8 L331.42 339.40 L333.02 337.8" fill="none" stroke="#c53fc3" stroke-width=".8"/>
<circle cx="339.90" cy="339.40" r=".9" fill="#c53fc3"/><path d="M338.30 337.8 L339.90 339.40 L341.50 337.8" fill="none" stroke="#c53fc3" stroke-width=".8"/>
<circle cx="353.75" cy="339.40" r=".9" fill="#c53fc3"/><path d="M352.15 337.8 L353.75 339.40 L355.35 337.8" fill="none" stroke="#c53fc3" stroke-width=".8"/>
<circle cx="361.94" cy="340.20" r=".9" fill="#c53fc3"/><path d="M360.34 337.8 L361.94 340.20 L363.54 337.8" fill="none" stroke="#c53fc3" stroke-width=".8"/>
<circle cx="367.11" cy="340.20" r=".9" fill="#c53fc3"/><path d="M365.51 337.8 L367.11 340.20 L368.71 337.8" fill="none" stroke="#c53fc3" stroke-width=".8"/>
<circle cx="381.01" cy="339.00" r=".9" fill="#c53fc3"/><path d="M379.41 337.8 L381.01 339.00 L382.61 337.8" fill="none" stroke="#c53fc3" stroke-width=".8"/>
<circle cx="387.71" cy="339.80" r=".9" fill="#c53fc3"/><path d="M386.11 337.8 L387.71 339.80 L389.31 337.8" fill="none" stroke="#c53fc3" stroke-width=".8"/>
<circle cx="401.69" cy="339.00" r=".9" fill="#c53fc3"/><path d="M400.09 337.8 L401.69 339.00 L403.29 337.8" fill="none" stroke="#c53fc3" stroke-width=".8"/>
<circle cx="407.79" cy="340.20" r=".9" fill="#c53fc3"/><path d="M406.19 337.8 L407.79 340.20 L409.39 337.8" fill="none" stroke="#c53fc3" stroke-width=".8"/>
<circle cx="421.75" cy="339.00" r=".9" fill="#c53fc3"/><path d="M420.15 337.8 L421.75 339.00 L423.35 337.8" fill="none" stroke="#c53fc3" stroke-width=".8"/>
<circle cx="426.17" cy="339.40" r=".9" fill="#c53fc3"/><path d="M424.57 337.8 L426.17 339.40 L427.77 337.8" fill="none" stroke="#c53fc3" stroke-width=".8"/>
<circle cx="432.31" cy="339.80" r=".9" fill="#c53fc3"/><path d="M430.71 337.8 L432.31 339.80 L433.91 337.8" fill="none" stroke="#c53fc3" stroke-width=".8"/>
<circle cx="436.40" cy="339.80" r=".9" fill="#c53fc3"/><path d="M434.80 337.8 L436.40 339.80 L438.00 337.8" fill="none" stroke="#c53fc3" stroke-width=".8"/>
<circle cx="448.70" cy="340.20" r=".9" fill="#c53fc3"/><path d="M447.10 337.8 L448.70 340.20 L450.30 337.8" fill="none" stroke="#c53fc3" stroke-width=".8"/>
<circle cx="453.44" cy="339.00" r=".9" fill="#c53fc3"/><path d="M451.84 337.8 L453.44 339.00 L455.04 337.8" fill="none" stroke="#c53fc3" stroke-width=".8"/>
<circle cx="459.53" cy="339.40" r=".9" fill="#c53fc3"/><path d="M457.93 337.8 L459.53 339.40 L461.13 337.8" fill="none" stroke="#c53fc3" stroke-width=".8"/>
<circle cx="463.68" cy="339.80" r=".9" fill="#c53fc3"/><path d="M462.08 337.8 L463.68 339.80 L465.28 337.8" fill="none" stroke="#c53fc3" stroke-width=".8"/>
<circle cx="471.40" cy="340.20" r=".9" fill="#c53fc3"/><path d="M469.80 337.8 L471.40 340.20 L473.00 337.8" fill="none" stroke="#c53fc3" stroke-width=".8"/>
<circle cx="476.67" cy="340.20" r=".9" fill="#c53fc3"/><path d="M475.07 337.8 L476.67 340.20 L478.27 337.8" fill="none" stroke="#c53fc3" stroke-width=".8"/>
<circle cx="488.99" cy="339.40" r=".9" fill="#c53fc3"/><path d="M487.39 337.8 L488.99 339.40 L490.59 337.8" fill="none" stroke="#c53fc3" stroke-width=".8"/>
<circle cx="501.66" cy="339.40" r=".9" fill="#c53fc3"/><path d="M500.06 337.8 L501.66 339.40 L503.26 337.8" fill="none" stroke="#c53fc3" stroke-width=".8"/>
<circle cx="511.93" cy="339.80" r=".9" fill="#c53fc3"/><path d="M510.33 337.8 L511.93 339.80 L513.53 337.8" fill="none" stroke="#c53fc3" stroke-width=".8"/>
<circle cx="525.02" cy="339.40" r=".9" fill="#c53fc3"/><path d="M523.42 337.8 L525.02 339.40 L526.62 337.8" fill="none" stroke="#c53fc3" stroke-width=".8"/>
<circle cx="536.27" cy="339.40" r=".9" fill="#c53fc3"/><path d="M534.67 337.8 L536.27 339.40 L537.87 337.8" fill="none" stroke="#c53fc3" stroke-width=".8"/>
<circle cx="547.66" cy="339.40" r=".9" fill="#c53fc3"/><path d="M546.06 337.8 L547.66 339.40 L549.26 337.8" fill="none" stroke="#c53fc3" stroke-width=".8"/>
<circle cx="558.53" cy="340.20" r=".9" fill="#c53fc3"/><path d="M556.93 337.8 L558.53 340.20 L560.13 337.8" fill="none" stroke="#c53fc3" stroke-width=".8"/>
<circle cx="571.36" cy="339.00" r=".9" fill="#c53fc3"/><path d="M569.76 337.8 L571.36 339.00 L572.96 337.8" fill="none" stroke="#c53fc3" stroke-width=".8"/>
<circle cx="579.57" cy="339.00" r=".9" fill="#c53fc3"/><path d="M577.97 337.8 L579.57 339.00 L581.17 337.8" fill="none" stroke="#c53fc3" stroke-width=".8"/>
<circle cx="584.66" cy="339.80" r=".9" fill="#c53fc3"/><path d="M583.06 337.8 L584.66 339.80 L586.26 337.8" fill="none" stroke="#c53fc3" stroke-width=".8"/>
<circle cx="591.04" cy="340.20" r=".9" fill="#c53fc3"/><path d="M589.44 337.8 L591.04 340.20 L592.64 337.8" fill="none" stroke="#c53fc3" stroke-width=".8"/>
<circle cx="597.61" cy="340.20" r=".9" fill="#c53fc3"/><path d="M596.01 337.8 L597.61 340.20 L599.21 337.8" fill="none" stroke="#c53fc3" stroke-width=".8"/>
<circle cx="604.55" cy="339.40" r=".9" fill="#c53fc3"/><path d="M602.95 337.8 L604.55 339.40 L606.15 337.8" fill="none" stroke="#c53fc3" stroke-width=".8"/>
<circle cx="617.84" cy="339.00" r=".9" fill="#c53fc3"/><path d="M616.24 337.8 L617.84 339.00 L619.44 337.8" fill="none" stroke="#c53fc3" stroke-width=".8"/>
<circle cx="623.11" cy="340.20" r=".9" fill="#c53fc3"/><path d="M621.51 337.8 L623.11 340.20 L624.71 337.8" fill="none" stroke="#c53fc3" stroke-width=".8"/>
<circle cx="632.70" cy="339.00" r=".9" fill="#c53fc3"/><path d="M631.10 337.8 L632.70 339.00 L634.30 337.8" fill="none" stroke="#c53fc3" stroke-width=".8"/>
<circle cx="639.50" cy="339.40" r=".9" fill="#c53fc3"/><path d="M637.90 337.8 L639.50 339.40 L641.10 337.8" fill="none" stroke="#c53fc3" stroke-width=".8"/>
<circle cx="650.99" cy="339.00" r=".9" fill="#c53fc3"/><path d="M649.39 337.8 L650.99 339.00 L652.59 337.8" fill="none" stroke="#c53fc3" stroke-width=".8"/>
<circle cx="657.68" cy="340.20" r=".9" fill="#c53fc3"/><path d="M656.08 337.8 L657.68 340.20 L659.28 337.8" fill="none" stroke="#c53fc3" stroke-width=".8"/>
<circle cx="664.17" cy="339.00" r=".9" fill="#c53fc3"/><path d="M662.57 337.8 L664.17 339.00 L665.77 337.8" fill="none" stroke="#c53fc3" stroke-width=".8"/>
<circle cx="669.94" cy="339.80" r=".9" fill="#c53fc3"/><path d="M668.34 337.8 L669.94 339.80 L671.54 337.8" fill="none" stroke="#c53fc3" stroke-width=".8"/>
<circle cx="679.25" cy="339.40" r=".9" fill="#c53fc3"/><path d="M677.65 337.8 L679.25 339.40 L680.85 337.8" fill="none" stroke="#c53fc3" stroke-width=".8"/>
<circle cx="684.17" cy="339.40" r=".9" fill="#c53fc3"/><path d="M682.57 337.8 L684.17 339.40 L685.77 337.8" fill="none" stroke="#c53fc3" stroke-width=".8"/>
<circle cx="697.08" cy="339.80" r=".9" fill="#c53fc3"/><path d="M695.48 337.8 L697.08 339.80 L698.68 337.8" fill="none" stroke="#c53fc3" stroke-width=".8"/>
<path d="M108.5 337.8 V359" stroke="#c53fc3" stroke-width=".8"/>
<circle cx="108.5" cy="342.9" r="1.05" fill="#c53fc3"/>
<circle cx="108.5" cy="349.4" r="1.05" fill="#c53fc3"/>
<circle cx="108.5" cy="359" r="1.05" fill="#c53fc3"/>
<path d="M498.5 337.8 V362" stroke="#c53fc3" stroke-width=".8"/>
<circle cx="498.5" cy="362" r="1.05" fill="#c53fc3"/>
<defs><linearGradient id="hg" x1="0" y1="0" x2="0" y2="1"><stop offset="0" stop-color="#f4f5f8"/><stop offset="1" stop-color="#d9dce3"/></linearGradient><linearGradient id="sg" x1="0" y1="0" x2="0" y2="1"><stop offset="0" stop-color="#48bcf6"/><stop offset=".55" stop-color="#22aaf5"/><stop offset="1" stop-color="#1a9de8"/></linearGradient></defs>
<rect x="30.5" y="448.9" width="666.5" height="7.6" fill="none" stroke="#e2e5ec" stroke-width=".6"/>
<rect x="39" y="449.6" width="649" height="6.4" fill="url(#sg)"/>
<rect x="30.3" y="448.3" width="9.6" height="8.8" rx="1.4" fill="url(#hg)" stroke="#c2c6cf" stroke-width=".6"/>
<rect x="33.2" y="450.6" width="3.8" height="4.2" fill="#a3a8bb"/>
<path d="M34.4 450.6 V454.8 M35.7 450.6 V454.8" stroke="#eef0f4" stroke-width=".45"/>
<rect x="687.0" y="448.3" width="9.6" height="8.8" rx="1.4" fill="url(#hg)" stroke="#c2c6cf" stroke-width=".6"/>
<rect x="689.9" y="450.6" width="3.8" height="4.2" fill="#a3a8bb"/>
<path d="M691.1 450.6 V454.8 M692.4 450.6 V454.8" stroke="#eef0f4" stroke-width=".45"/>
<line x1="272.7" y1="463.6" x2="280.7" y2="463.6" stroke="#c43dbf" stroke-width="1"/>
<circle cx="276.7" cy="463.6" r="1.1" fill="#fff" stroke="#c43dbf" stroke-width=".8"/>
<text x="284.7" y="465.8" font-size="6.2" fill="#555" font-family="Liberation Sans" textLength="9.8" lengthAdjust="spacingAndGlyphs">FPS</text>
<line x1="302.9" y1="463.6" x2="310.9" y2="463.6" stroke="#f08c3c" stroke-width="1"/>
<text x="314.6" y="465.8" font-size="6.2" fill="#555" font-family="Liberation Sans" textLength="12.4" lengthAdjust="spacingAndGlyphs">Jank</text>
<line x1="335.7" y1="463.6" x2="343.7" y2="463.6" stroke="#e04848" stroke-width="1"/>
<text x="347.7" y="465.8" font-size="6.2" fill="#555" font-family="Liberation Sans" textLength="20.2" lengthAdjust="spacingAndGlyphs">BigJank</text>
<line x1="377" y1="463.6" x2="385" y2="463.6" stroke="#3c7ce8" stroke-width="1"/>
<text x="388.6" y="465.8" font-size="6.2" fill="#555" font-family="Liberation Sans" textLength="17.8" lengthAdjust="spacingAndGlyphs">Stutter</text>
<line x1="416" y1="463.6" x2="424" y2="463.6" stroke="#35c8e8" stroke-width="1"/>
<text x="427.4" y="465.8" font-size="6.2" fill="#555" font-family="Liberation Sans" textLength="28.7" lengthAdjust="spacingAndGlyphs">InterFrame</text>
</svg>
</body></html>
